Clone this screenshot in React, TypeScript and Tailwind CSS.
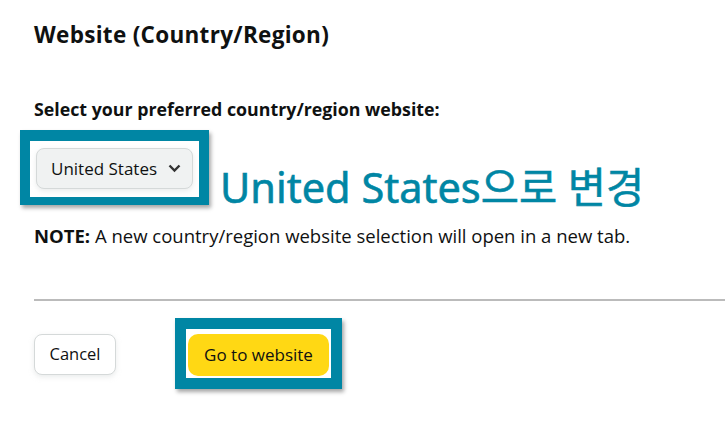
export default function App() {
  return (
    <div className="w-[725px] h-[448px] overflow-hidden bg-white text-[#0f1111] font-['Open_Sans',sans-serif]">
      <div className="pl-[34px] pt-[20px]">
        <h1 className="text-[22.5px] font-bold leading-[30px] tracking-[0.3px]">Website (Country/Region)</h1>

        <p className="mt-[47px] text-[17.8px] font-bold leading-[24px]">
          Select your preferred country/region website:
        </p>

        <div className="mt-[9px] -ml-[14px] flex items-end">
          <div className="border-[10px] border-t-[11px] border-b-[8px] border-[#0086a4] bg-white px-[6px] pt-[7px] pb-[8px] shadow-[2px_3px_4px_rgba(0,0,0,0.35)]">
            <button className="flex h-[41px] w-[157px] items-center gap-[11px] rounded-[8px] border border-[#d5d9d9] bg-[#f0f2f2] pl-[14px] text-[17px] text-[#0f1111] shadow-[0_2px_5px_rgba(213,217,217,0.5)]">
              United States
              <svg width="13" height="9" viewBox="0 0 13 9" fill="none">
                <path d="M1.5 1.5 L6.5 6.5 L11.5 1.5" stroke="#333" strokeWidth="2.4" />
              </svg>
            </button>
          </div>
          <span className="ml-[11px] mb-[-7px] text-[41.5px] leading-[50px] text-[#0086a4] font-['Noto_Sans','Noto_Sans_CJK_KR',sans-serif] [-webkit-text-stroke:0.6px_#0086a4]">
            United States으로 변경
          </span>
        </div>

        <p className="mt-[19px] text-[18.5px] leading-[24px]">
          <span className="font-bold">NOTE:</span> A new country/region website selection will open in a new tab.
        </p>

        <div className="mt-[51px] h-[2px] bg-[#bbbbbb]" />

        <div className="mt-[17px] flex items-center">
          <button className="mt-[2px] h-[41px] w-[82px] rounded-[8px] border border-[#d5d9d9] bg-white text-[16.5px] shadow-[0_2px_5px_rgba(213,217,217,0.5)]">
            Cancel
          </button>
          <div className="ml-[59px] border-[11px] border-[#0086a4] bg-white px-[2px] pt-[5px] pb-[2px] shadow-[2px_3px_4px_rgba(0,0,0,0.35)]">
            <button className="h-[42px] w-[141px] rounded-[10px] bg-[#ffd814] text-[17px]">
              Go to website
            </button>
          </div>
        </div>
      </div>
    </div>
  );
}
